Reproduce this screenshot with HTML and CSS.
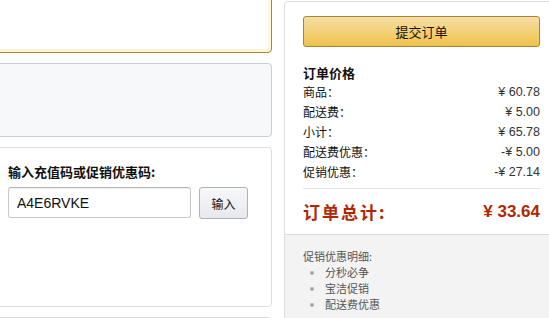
FILE: index.html
```html
<!DOCTYPE html>
<html lang="zh-CN">
<head>
  <meta charset="UTF-8" />
  <title>提交订单</title>
  <link rel="stylesheet" href="styles.css">
</head>
<body>
  <div class="page">
    <div class="left-col">
      <div class="box box-address"></div>
      <div class="box box-payment"></div>
      <div class="box box-promo">
        <div class="promo-label">输入充值码或促销优惠码:</div>
        <div class="promo-form">
          <input class="promo-input" type="text" value="A4E6RVKE" />
          <button class="promo-btn">输入</button>
        </div>
      </div>
      <div class="box box-more"></div>
    </div>

    <div class="summary">
      <div class="summary-main">
        <button class="submit-btn">提交订单</button>
        <h3 class="summary-title">订单价格</h3>
        <div class="row"><span>商品：</span><span>¥ 60.78</span></div>
        <div class="row"><span>配送费：</span><span>¥ 5.00</span></div>
        <div class="row"><span>小计：</span><span>¥ 65.78</span></div>
        <div class="row"><span>配送费优惠：</span><span>-¥ 5.00</span></div>
        <div class="row"><span>促销优惠：</span><span>-¥ 27.14</span></div>
        <div class="total-row"><span>订单总计:</span><span>¥ 33.64</span></div>
      </div>
      <div class="summary-promos">
        <p>促销优惠明细:</p>
        <ul>
          <li>分秒必争</li>
          <li>宝洁促销</li>
          <li>配送费优惠</li>
        </ul>
      </div>
    </div>
  </div>
</body>
</html>
```

FILE: styles.css
```css
body {
  margin: 0;
  padding: 0;
  background: #fff;
  color: #111;
  font-family: "Liberation Sans", "Noto Sans CJK SC", sans-serif;
  font-size: 13px;
  overflow: hidden;
}
.page {
  display: flex;
  align-items: flex-start;
  gap: 12px;
}
.left-col {
  width: 284px;
  margin-left: -12px;
  margin-top: -10px;
  display: flex;
  flex-direction: column;
  gap: 10px;
  flex-shrink: 0;
}
.box {
  box-sizing: border-box;
  border-radius: 4px;
  border: 1px solid #ddd;
  background: #fff;
}
.box-address {
  height: 63px;
  border-color: #a88734;
  box-shadow: inset 0 0 0 3px #fdf6d8;
}
.box-payment {
  height: 74px;
  background: #f6f8f9;
  border-color: #c3d0d7;
}
.box-promo {
  height: 160px;
  padding: 15px 0 0 19px;
}
.box-more {
  height: 40px;
}
.promo-label {
  font-family: "Noto Sans CJK SC", sans-serif;
  font-weight: bold;
  font-size: 13px;
  line-height: 18px;
}
.promo-form {
  display: flex;
  gap: 8px;
  margin-top: 6px;
}
.promo-input {
  box-sizing: border-box;
  width: 183px;
  height: 31px;
  border: 1px solid #c9c9c9;
  border-top-color: #b5b5b5;
  border-radius: 3px;
  padding: 0 8px;
  font-family: "Liberation Sans", sans-serif;
  font-size: 14px;
  color: #111;
  box-shadow: inset 0 1px 1px rgba(0, 0, 0, 0.06);
}
.promo-btn {
  box-sizing: border-box;
  width: 49px;
  height: 32px;
  border: 1px solid #adb1b8;
  border-radius: 3px;
  background: linear-gradient(#f7f8fa, #e7e9ec);
  font-family: "Noto Sans CJK SC", sans-serif;
  font-size: 12px;
  color: #111;
  padding: 0;
}

.summary {
  box-sizing: border-box;
  width: 290px;
  margin-top: 1px;
  border: 1px solid #ddd;
  border-radius: 4px;
  flex-shrink: 0;
  overflow: hidden;
}
.summary-main {
  padding: 14px 0 0 18px;
  width: 237px;
}
.submit-btn {
  box-sizing: border-box;
  width: 237px;
  height: 31px;
  border: 1px solid #a88734;
  border-radius: 3px;
  background: linear-gradient(#f7dfa5, #f0c14b);
  font-family: "Noto Sans CJK SC", sans-serif;
  font-size: 13px;
  color: #111;
  padding: 0;
}
.summary-title {
  margin: 16px 0 0;
  font-family: "Noto Sans CJK SC", sans-serif;
  font-size: 13px;
  font-weight: bold;
  line-height: 19px;
}
.row {
  display: flex;
  justify-content: space-between;
  line-height: 20px;
  font-size: 12.5px;
}
.row span:first-child {
  font-family: "Noto Sans CJK SC", sans-serif;
  font-size: 12px;
}
.row span:last-child {
  color: #333;
}
.total-row {
  display: flex;
  justify-content: space-between;
  align-items: center;
  margin-top: 6px;
  border-top: 1px solid #e3e3e3;
  height: 45px;
  font-size: 17px;
  font-weight: bold;
  color: #b12704;
}
.total-row span:first-child {
  font-family: "Noto Sans CJK SC", sans-serif;
  letter-spacing: 2px;
}
.summary-promos {
  border-top: 1px solid #ddd;
  background: #f3f3f3;
  padding: 13px 0 20px 18px;
  font-family: "Noto Sans CJK SC", sans-serif;
  font-size: 11px;
  color: #555;
}
.summary-promos p {
  margin: 0;
  line-height: 16px;
}
.summary-promos ul {
  margin: 0;
  padding: 0 0 0 22px;
  line-height: 16px;
}
.summary-promos li::marker {
  color: #aaa;
}
```
